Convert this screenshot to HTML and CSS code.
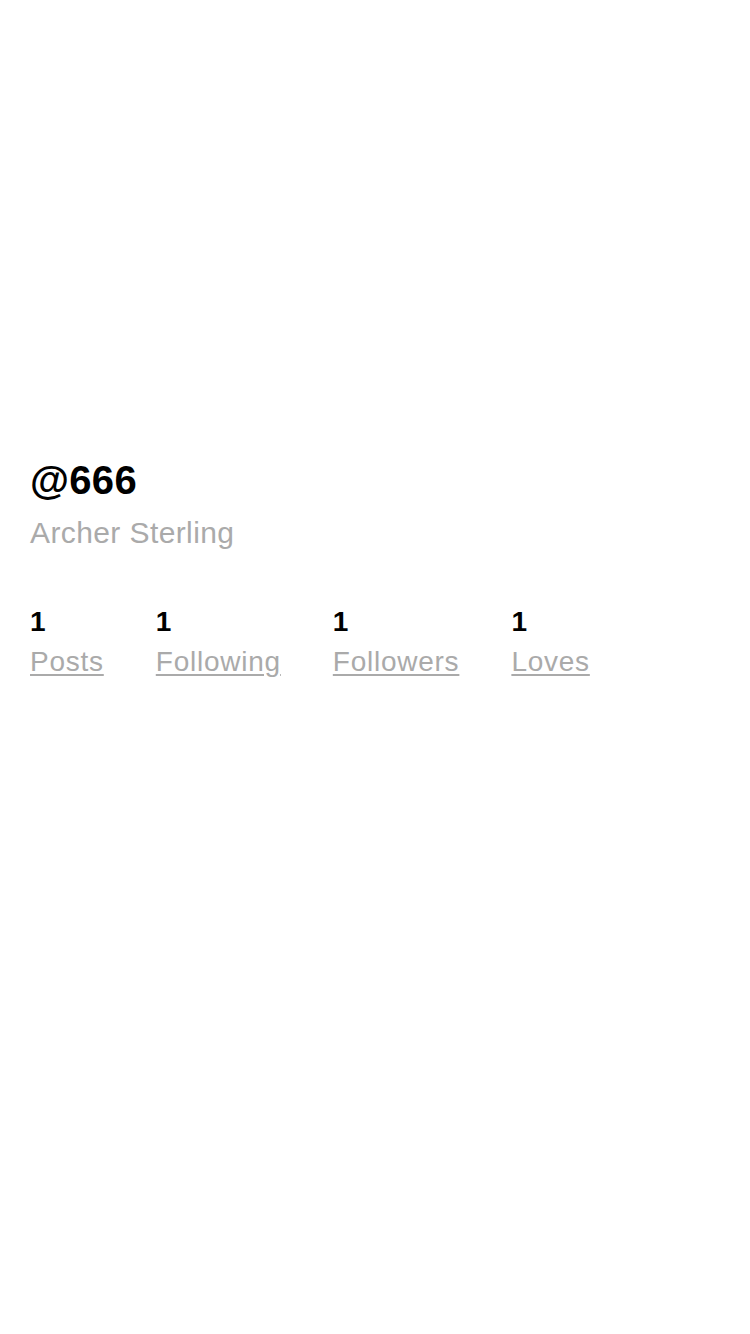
FILE: index.html
```html
<!DOCTYPE html>
<html>
<head>
<meta charset="utf-8">
<link rel="stylesheet" href="styles.css">
</head>
<body>
<div class="profile">
  <div class="handle">@666</div>
  <div class="name">Archer Sterling</div>
  <div class="stats">
    <div class="stat"><div class="num">1</div><a class="label" href="#">Posts</a></div>
    <div class="stat"><div class="num">1</div><a class="label" href="#">Following</a></div>
    <div class="stat"><div class="num">1</div><a class="label" href="#">Followers</a></div>
    <div class="stat"><div class="num">1</div><a class="label" href="#">Loves</a></div>
  </div>
</div>
</body>
</html>
```
FILE: styles.css
```css
html, body {
  margin: 0;
  padding: 0;
  background: #fff;
  font-family: "Liberation Sans", Arial, sans-serif;
}
.profile {
  padding: 457px 30px 0 30px;
}
.handle {
  font-size: 40px;
  font-weight: bold;
  color: #000;
  line-height: 46px;
  letter-spacing: 0.3px;
}
.name {
  margin-top: 12px;
  font-size: 30px;
  color: #aaa;
  line-height: 36px;
  letter-spacing: 0.4px;
}
.stats {
  display: flex;
  gap: 52px;
  margin-top: 55px;
}
.stat {
  display: flex;
  flex-direction: column;
}
.num {
  font-size: 28px;
  font-weight: bold;
  color: #000;
  line-height: 32px;
}
.label {
  margin-top: 6px;
  font-size: 28px;
  color: #aaa;
  line-height: 36px;
  letter-spacing: 0.75px;
  text-decoration: underline;
  text-decoration-color: #aaa;
  text-underline-offset: 3px;
}
```
